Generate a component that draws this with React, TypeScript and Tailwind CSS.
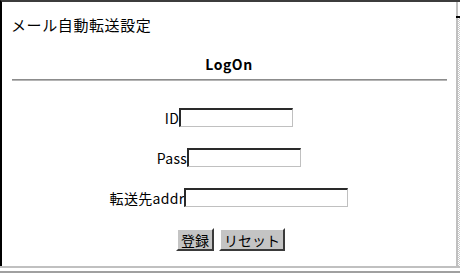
import React from 'react';

const jp = "font-['MS_PGothic','Noto_Sans_CJK_JP','Liberation_Sans',sans-serif]";

function Field({ label, width }: { label: string; width: string }) {
  return (
    <div className="flex items-center justify-center">
      <span className="text-[14px] leading-[18px] tracking-[0.3px] text-black">{label}</span>
      <input
        type="text"
        className={`${width} h-[19px] bg-white border-t-2 border-l-2 border-t-[#2a2a2a] border-l-[#2a2a2a] border-r border-b border-r-[#c0c0c0] border-b-[#c0c0c0] outline-none`}
      />
    </div>
  );
}

function Button({ children }: { children: React.ReactNode }) {
  return (
    <button
      type="button"
      className="h-[23px] px-[3px] bg-[#c4c4c4] text-[14px] leading-[18px] text-black border-2 border-t-white border-l-white border-r-[#3a3a3a] border-b-[#3a3a3a]"
    >
      {children}
    </button>
  );
}

export default function App() {
  return (
    <div className={`w-[460px] h-[273px] bg-white flex flex-col overflow-hidden ${jp}`}>
      <div className="flex flex-1 min-h-0">
        {/* page */}
        <div className="flex-1 flex flex-col border-t-2 border-l-2 border-t-[#3c3c3c] border-l-black">
          <div className="mt-[13px] pl-[9px] text-[15px] leading-[20px] tracking-[0.6px] text-black">
            メール自動転送設定
          </div>
          <div className="mt-[20px] text-center text-[14px] leading-[18px] font-bold tracking-[0.5px] text-black">
            LogOn
          </div>
          <div className="mt-[6px] mx-[10px] mr-[9px] border-t border-b border-t-[#8c8c8c] border-b-[#b4b4b4]" />
          <div className="mt-[27px] flex flex-col gap-[21px]">
            <Field label="ID" width="w-[114px]" />
            <Field label="Pass" width="w-[114px]" />
            <Field label="転送先addr" width="w-[164px]" />
          </div>
          <div className="mt-[21px] flex justify-center gap-[5px] pl-[3px]">
            <Button>登録</Button>
            <Button>リセット</Button>
          </div>
        </div>
        {/* scrollbar edge */}
        <div className="w-[4px] flex flex-col border-t-2 border-t-[#3c3c3c]">
          <div className="h-[14px] border-l-2 border-l-[#c0c0c0]" />
          <div className="h-[2px] bg-black" />
          <div className="flex-1 border-l-2 border-l-[#c0c0c0] bg-[repeating-conic-gradient(#c8c8c8_0_25%,#ffffff_0_50%)] bg-[length:2px_2px]" />
        </div>
      </div>
      {/* bottom frame */}
      <div className="h-[2px] bg-[#c0c0c0]" />
      <div className="h-[3px] bg-white" />
      <div className="h-[2px] bg-[#a0a0a0]" />
    </div>
  );
}
